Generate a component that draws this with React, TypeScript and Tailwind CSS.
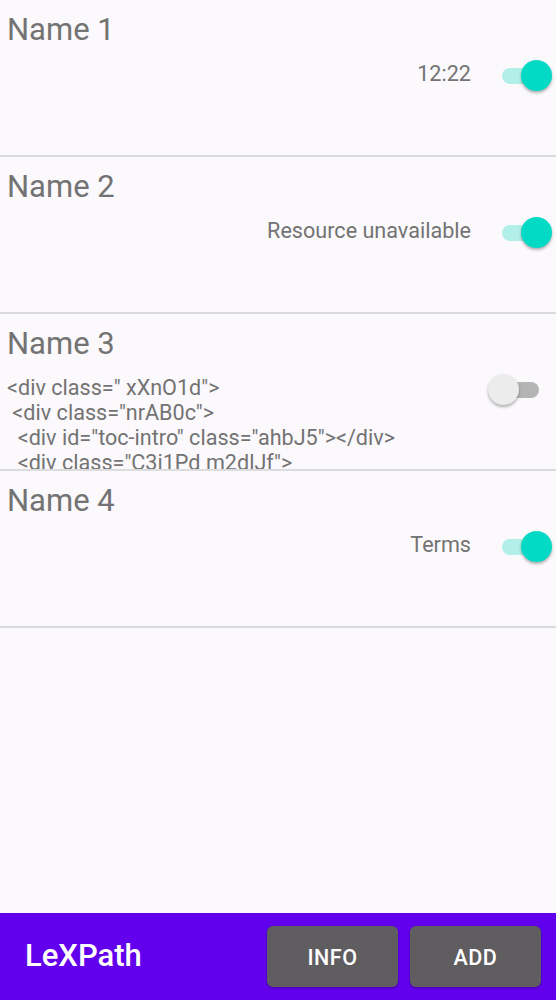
import React from 'react';

interface Item {
  name: string;
  detail: string;
  enabled: boolean;
  code?: boolean;
}

const items: Item[] = [
  { name: 'Name 1', detail: '12:22', enabled: true },
  { name: 'Name 2', detail: 'Resource unavailable', enabled: true },
  {
    name: 'Name 3',
    detail:
      '<div class=" xXnO1d">\n <div class="nrAB0c">\n  <div id="toc-intro" class="ahbJ5"></div>\n  <div class="C3i1Pd m2dlJf">',
    enabled: false,
    code: true,
  },
  { name: 'Name 4', detail: 'Terms', enabled: true },
];

const Toggle = ({ on }: { on: boolean }) => (
  <div className="relative h-[32px] w-[64px] shrink-0">
    <div
      className={
        on
          ? 'absolute left-[14px] top-[8px] h-[16px] w-[37px] rounded-full bg-[#b2efe9]'
          : 'absolute left-[14px] top-[8px] h-[16px] w-[37px] rounded-full bg-[#b4b4b5]'
      }
    />
    <div
      className={
        on
          ? 'absolute left-[33px] top-0 h-[31px] w-[31px] rounded-full bg-[#03dac5] shadow-[0_2px_3px_rgba(0,0,0,0.3)]'
          : 'absolute left-0 top-0 h-[31px] w-[31px] rounded-full bg-[#ececec] shadow-[0_2px_3px_rgba(0,0,0,0.3)]'
      }
    />
  </div>
);

const Row = ({ item }: { item: Item }) => (
  <div className="border-b-2 border-[#dcdbdd]">
    <div className="flex h-[155px] flex-col overflow-hidden pl-[7px] pr-[4px]">
      <div className="mt-[12px] text-[31px] leading-[36px] text-[#737373]">{item.name}</div>
      <div className="mt-[12px] flex items-start">
        <div className="flex min-w-0 flex-1 justify-end pt-[1px]">
          <div
            className={
              item.code
                ? 'w-full whitespace-pre-wrap text-[21.6px] leading-[25px] text-[#737373]'
                : 'whitespace-pre text-[21.6px] leading-[25px] text-[#737373]'
            }
          >
            {item.detail}
          </div>
        </div>
        <div className="ml-[17px]">
          <Toggle on={item.enabled} />
        </div>
      </div>
    </div>
  </div>
);

export default function App() {
  return (
    <div className="flex h-screen flex-col bg-[#fbf9fc]" style={{ fontFamily: 'Roboto, "Noto Sans", sans-serif' }}>
      <div className="flex-1">
        {items.map((item) => (
          <Row key={item.name} item={item} />
        ))}
      </div>
      <div className="flex h-[87px] items-center bg-[#6200ee] pl-[25px] pr-[15px]">
        <span className="text-[31px] font-medium text-white">LeXPath</span>
        <div className="ml-auto flex gap-[12px]">
          <button className="h-[61px] w-[131px] rounded-[6px] bg-[#5f5d60] pt-[3px] text-[21.5px] font-medium tracking-[0.5px] text-white shadow-[0_1px_3px_rgba(0,0,0,0.3)]">
            INFO
          </button>
          <button className="h-[61px] w-[131px] rounded-[6px] bg-[#5f5d60] pt-[3px] text-[21.5px] font-medium tracking-[0.5px] text-white shadow-[0_1px_3px_rgba(0,0,0,0.3)]">
            ADD
          </button>
        </div>
      </div>
    </div>
  );
}
